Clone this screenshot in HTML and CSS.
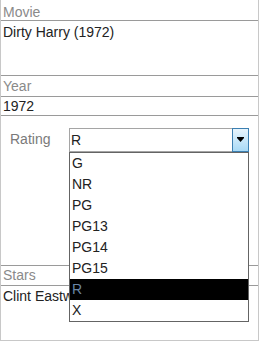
FILE: index.html
```html
<!DOCTYPE html>
<html lang="en">
<head>
    <meta charset="UTF-8">
    <title>Movie details</title>
    <link rel="stylesheet" href="styles.css">
</head>
<body>

    <div class="form">
        <div class="field">
            <div class="field-label first">Movie</div>
            <div class="field-value tall">Dirty Harry (1972)</div>
        </div>

        <div class="field">
            <div class="field-label">Year</div>
            <div class="field-value short">1972</div>
        </div>

        <div class="rating-row">
            <span class="rating-label">Rating</span>
            <div class="select">
                <span class="select-value">R</span>
                <span class="select-btn">
                    <svg width="7" height="5" viewBox="0 0 7 5">
                        <rect x="0" y="0" width="7" height="1" fill="#000"/>
                        <polygon points="0,1 7,1 3.5,5" fill="#000"/>
                    </svg>
                </span>
                <ul class="options">
                    <li>G</li>
                    <li>NR</li>
                    <li>PG</li>
                    <li>PG13</li>
                    <li>PG14</li>
                    <li>PG15</li>
                    <li class="selected">R</li>
                    <li>X</li>
                </ul>
            </div>
        </div>

        <div class="field stars">
            <div class="field-label">Stars</div>
            <div class="field-value stars-value">Clint Eastwood</div>
        </div>
    </div>

</body>
</html>
```

FILE: styles.css
```css
body {
    margin: 0;
    font-family: 'Liberation Sans', Arial, sans-serif;
    font-size: 14px;
    color: #222;
    background-color: white;
}
.form {
    box-sizing: border-box;
    width: 259px;
    height: 341px;
    border-left: 1px solid #c8c8c8;
    border-right: 1px solid #c8c8c8;
    border-bottom: 1px solid #c8c8c8;
    display: flex;
    flex-direction: column;
}
.field-label {
    height: 20px;
    line-height: 20px;
    padding-left: 2px;
    color: #8a8a8a;
    border-bottom: 1px solid #9a9a9a;
}
.field-label.first {
    height: 18px;
    padding-top: 2px;
}
.field-value {
    padding-left: 2px;
    border-bottom: 1px solid #9a9a9a;
    white-space: nowrap;
    overflow: hidden;
}
.field-value.tall {
    height: 53px;
    padding-top: 1px;
    line-height: 20px;
}
.field-value.short {
    height: 18px;
    line-height: 18px;
}
.rating-row {
    box-sizing: border-box;
    height: 149px;
    padding-top: 12px;
    display: flex;
    align-items: flex-start;
}
.rating-label {
    box-sizing: border-box;
    width: 68px;
    padding-left: 9px;
    line-height: 22px;
    color: #7a7a7a;
}
.select {
    position: relative;
    box-sizing: border-box;
    width: 180px;
    height: 24px;
    border: 1px solid #a5a5a5;
    display: flex;
}
.select-value {
    flex: 1;
    padding-left: 1px;
    line-height: 22px;
}
.select-btn {
    width: 15px;
    margin: -1px -1px -1px 0;
    border: 1px solid #3c7fb1;
    background: linear-gradient(#e8f5fd, #a9daf6);
    display: flex;
    align-items: center;
    justify-content: center;
}
.select-btn svg {
    display: block;
    margin-top: -1px;
}
.options {
    position: absolute;
    top: 23px;
    left: -1px;
    box-sizing: border-box;
    width: 180px;
    margin: 0;
    padding: 0;
    list-style: none;
    background-color: white;
    border: 1px solid #646464;
    z-index: 2;
}
.options li {
    height: 21px;
    line-height: 21px;
    padding-left: 2px;
}
.options li.selected {
    background-color: #000;
    color: #6a86a6;
}
.stars {
    border-top: 1px solid #9a9a9a;
    flex: 1;
    display: flex;
    flex-direction: column;
}
.stars .field-label {
    height: 19px;
    line-height: 19px;
}
.stars-value {
    flex: 1;
    border-bottom: none;
    line-height: 20px;
}
```
